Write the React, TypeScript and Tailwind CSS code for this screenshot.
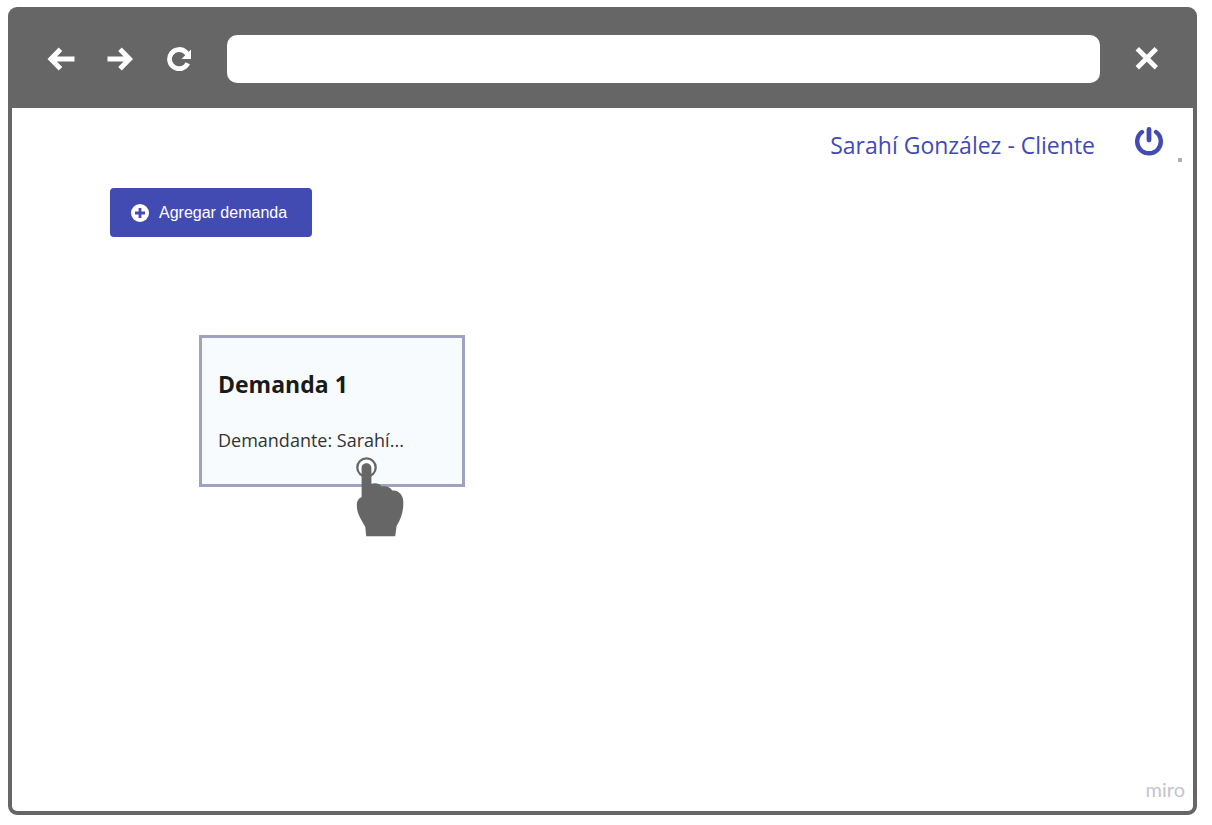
import React from "react";

function BackIcon() {
  return (
    <svg width="28" height="24" viewBox="0 0 28 24" fill="none" stroke="#fff" strokeWidth="5" aria-hidden="true">
      <path d="M27.5 12H5M13.5 2.3L4 12L13.5 21.7" />
    </svg>
  );
}

function ForwardIcon() {
  return (
    <svg width="26" height="24" viewBox="0 0 26 24" fill="none" stroke="#fff" strokeWidth="5" aria-hidden="true">
      <path d="M.5 12H22M13 2.3L22.5 12L13 21.7" />
    </svg>
  );
}

function ReloadIcon() {
  return (
    <svg width="24" height="24" viewBox="0 0 24 24" aria-hidden="true">
      <path d="M20.8 16.3A9.6 9.6 0 1 1 18.8 5.2L21 8" fill="none" stroke="#fff" strokeWidth="4.8" />
      <path d="M24 2.5V12H14.5Z" fill="#fff" />
    </svg>
  );
}

function CloseIcon() {
  return (
    <svg width="24" height="24" viewBox="0 0 24 24" fill="none" stroke="#fff" strokeWidth="4.8" aria-hidden="true">
      <path d="M2.3 1.8L21.3 20.8M21.3 1.8L2.3 20.8" />
    </svg>
  );
}

function PowerIcon() {
  return (
    <svg width="28" height="30" viewBox="0 0 28 30" fill="none" stroke="#424bb2" strokeLinecap="round" aria-hidden="true">
      <path d="M7 6A11.8 11.8 0 1 0 21 6" strokeWidth="4.4" />
      <path d="M14 3.4V14" strokeWidth="4.8" />
    </svg>
  );
}

function PlusIcon() {
  return (
    <svg width="18" height="18" viewBox="0 0 18 18" aria-hidden="true">
      <circle cx="9" cy="9" r="9" fill="#fff" />
      <path d="M9 4V14M4 9H14" stroke="#424bb2" strokeWidth="2.8" />
    </svg>
  );
}

function TapHand() {
  return (
    <svg
      className="pointer-events-none absolute top-[119px] left-[154px]"
      width="50"
      height="82"
      viewBox="0 0 50 82"
      aria-hidden="true"
    >
      <circle cx="10.5" cy="10.5" r="9.2" fill="#fff" stroke="#666" strokeWidth="2.3" />
      <path
        d="M5.6 11C5.6 4.6 15.4 4.6 15.4 11V26.8C19 25.6 23.5 26 25.6 29.6C29.5 28.8 34 29.8 36.2 33.6C42.5 33 47.3 38 47.3 45C47.5 54 45.5 61 40.6 69L39.2 79.2H10.2L9.3 70C5 62 .8 57 .8 48C.8 44 2.5 41.5 5.6 40Z"
        fill="#666"
      />
    </svg>
  );
}

export default function App() {
  return (
    <div className="flex min-h-screen bg-white pt-[7px] pr-[15px] pb-[10px] pl-2 font-['Open_Sans',sans-serif]">
      <div className="flex grow flex-col rounded-[9px] border-4 border-[#666] bg-[#666]">
        <header className="flex h-[97px] items-center pr-[34px] pb-[2px] pl-[35px]">
          <button type="button" aria-label="Atrás" className="mr-8">
            <BackIcon />
          </button>
          <button type="button" aria-label="Adelante" className="mr-[34px]">
            <ForwardIcon />
          </button>
          <button type="button" aria-label="Recargar" className="mr-9">
            <ReloadIcon />
          </button>
          <input
            type="text"
            aria-label="Dirección"
            className="h-12 min-w-0 grow rounded-[10px] bg-white px-4 text-lg outline-none"
          />
          <button type="button" aria-label="Cerrar" className="ml-[35px]">
            <CloseIcon />
          </button>
        </header>

        <main className="flex grow flex-col rounded-b-[5px] bg-white">
          <div className="flex h-20 items-start justify-end pt-[18px] pr-[11px]">
            <span className="mr-10 pt-[3px] text-[23px] leading-8 text-[#424bb2]">Sarahí González - Cliente</span>
            <button type="button" aria-label="Cerrar sesión">
              <PowerIcon />
            </button>
            <span className="mt-8 ml-[15px] size-1 bg-[#a9acc6]" />
          </div>

          <button
            type="button"
            className="ml-[98px] flex h-[49px] w-[202px] items-center gap-[10px] rounded-sm bg-[#424bb2] px-[21px] font-['Liberation_Sans',sans-serif] text-base text-white"
          >
            <PlusIcon />
            Agregar demanda
          </button>

          <article className="relative mt-[98px] ml-[187px] h-[152px] w-[266px] border-3 border-[#a0a3bf] bg-[#f7fbfd] px-4 pt-[30px]">
            <h2 className="text-[23px] leading-8 font-bold text-[#1a1a1a]">Demanda 1</h2>
            <p className="mt-6 text-lg leading-8 text-[#333]">Demandante: Sarahí...</p>
            <TapHand />
          </article>

          <footer className="mt-auto flex justify-end pr-2 pb-[10px]">
            <span className="font-['Lato',sans-serif] text-xl leading-6 text-[#c4c4ce]">miro</span>
          </footer>
        </main>
      </div>
    </div>
  );
}
